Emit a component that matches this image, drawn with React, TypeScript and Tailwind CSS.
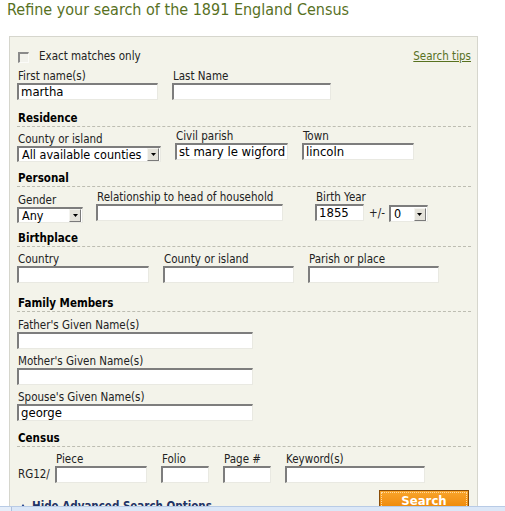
import React from "react";

const FONT =
  "font-['DejaVu_Sans_Condensed','DejaVu_Sans',sans-serif] [font-stretch:semi-condensed]";

function Field({ className, value }: { className: string; value?: string }) {
  return (
    <div
      className={
        "h-[17px] shrink-0 overflow-hidden whitespace-nowrap border-t-2 border-l-2 border-b border-r border-t-[#7d7d7d] border-l-[#7d7d7d] border-b-[#e9e9e2] border-r-[#e9e9e2] bg-white pl-[2px] text-[13px] leading-[14px] text-black " +
        className
      }
    >
      {value}
    </div>
  );
}

function Arrow() {
  return (
    <div className="flex h-[13px] w-[12px] shrink-0 items-center justify-center border border-t-[#f4f4f0] border-l-[#f4f4f0] border-b-[#7a7a7a] border-r-[#7a7a7a] bg-[#e4e2da]">
      <svg width="5" height="3" viewBox="0 0 5 3">
        <path d="M0 0h5L2.5 3z" fill="#000" />
      </svg>
    </div>
  );
}

function Select({ className, value }: { className: string; value: string }) {
  return (
    <div
      className={
        "flex shrink-0 items-center justify-between border-t-2 border-l-2 border-b border-r border-t-[#7d7d7d] border-l-[#7d7d7d] border-b-[#e9e9e2] border-r-[#e9e9e2] bg-white pl-[3px] pr-[1px] text-[12.5px] leading-[14px] text-black " +
        className
      }
    >
      <span className="whitespace-nowrap">{value}</span>
      <Arrow />
    </div>
  );
}

function Label({ children, className = "" }: { children: React.ReactNode; className?: string }) {
  return (
    <div className={"h-[13px] whitespace-nowrap pl-[1px] text-[11.5px] leading-[13px] text-[#222] " + className}>
      {children}
    </div>
  );
}

function Heading({ children, className }: { children: React.ReactNode; className: string }) {
  return (
    <div
      className={
        "border-b border-dashed border-[#bdbdb2] pb-[1px] pl-[1px] text-[11.5px] font-bold leading-[13px] text-black " +
        className
      }
    >
      {children}
    </div>
  );
}

export default function App() {
  return (
    <div className={"relative h-[511px] w-[505px] overflow-hidden bg-white " + FONT}>
      <h1 className="pl-[7px] pt-[1px] text-[16px] font-normal leading-[18px] text-[#58711f]">
        Refine your search of the 1891 England Census
      </h1>

      <div className="ml-[9px] mt-[17px] w-[469px] border border-[#d6d6cd] bg-[#f3f3ea] pb-[40px] pl-[7px] pr-[6px] pt-[13px]">
        <div className="flex h-[13px] items-start justify-between">
          <div className="flex items-start">
            <div className="ml-[1px] mt-[2px] h-[11px] w-[11px] border-t-2 border-l-2 border-b border-r border-t-[#8a8a8a] border-l-[#8a8a8a] border-b-[#fbfbf8] border-r-[#fbfbf8] bg-[#f2f2ec]" />
            <span className="ml-[10px] text-[11.5px] leading-[13px] text-[#222]">Exact matches only</span>
          </div>
          <a className="text-[11.5px] leading-[13px] text-[#58711f] underline" href="#">
            Search tips
          </a>
        </div>

        <div className="mt-[7px] flex gap-[14px]">
          <div>
            <Label>First name(s)</Label>
            <Field className="w-[141px]" value="martha" />
          </div>
          <div>
            <Label>Last Name</Label>
            <Field className="w-[159px]" />
          </div>
        </div>

        <Heading className="mt-[12px]">Residence</Heading>
        <div className="mt-[3px] flex gap-[14px]">
          <div className="pt-[3px]">
            <Label>County or island</Label>
            <Select className="h-[16px] w-[144px]" value="All available counties" />
          </div>
          <div>
            <Label>Civil parish</Label>
            <Field className="w-[113px]" value="st mary le wigford" />
          </div>
          <div>
            <Label>Town</Label>
            <Field className="w-[112px]" value="lincoln" />
          </div>
        </div>

        <Heading className="mt-[10px]">Personal</Heading>
        <div className="mt-[4px] flex">
          <div className="pt-[3px]">
            <Label>Gender</Label>
            <Select className="h-[16px] w-[66px]" value="Any" />
          </div>
          <div className="ml-[13px]">
            <Label>Relationship to head of household</Label>
            <Field className="w-[187px]" />
          </div>
          <div className="ml-[32px]">
            <Label>Birth Year</Label>
            <div className="flex items-start">
              <Field className="w-[49px]" value="1855" />
              <span className="ml-[5px] mt-[3px] text-[11.5px] leading-[13px] text-[#222]">+/-</span>
              <Select className="ml-[4px] mt-[1px] h-[17px] w-[39px]" value="0" />
            </div>
          </div>
        </div>

        <Heading className="mt-[9px]">Birthplace</Heading>
        <div className="mt-[6px] flex gap-[14px]">
          <div>
            <Label>Country</Label>
            <Field className="w-[132px]" />
          </div>
          <div>
            <Label>County or island</Label>
            <Field className="w-[131px]" />
          </div>
          <div>
            <Label>Parish or place</Label>
            <Field className="w-[131px]" />
          </div>
        </div>

        <Heading className="mt-[14px]">Family Members</Heading>
        <div className="mt-[7px]">
          <Label>Father's Given Name(s)</Label>
          <Field className="w-[236px]" />
        </div>
        <div className="mt-[6px]">
          <Label>Mother's Given Name(s)</Label>
          <Field className="w-[236px]" />
        </div>
        <div className="mt-[6px]">
          <Label>Spouse's Given Name(s)</Label>
          <Field className="w-[236px]" value="george" />
        </div>

        <Heading className="mt-[11px]">Census</Heading>
        <div className="mt-[6px] flex items-end">
          <div className="flex h-[17px] w-[38px] items-center pl-[1px] text-[11.5px] leading-[13px] text-[#222]">
            RG12/
          </div>
          <div>
            <Label>Piece</Label>
            <Field className="w-[92px]" />
          </div>
          <div className="ml-[14px]">
            <Label>Folio</Label>
            <Field className="w-[48px]" />
          </div>
          <div className="ml-[14px]">
            <Label>Page #</Label>
            <Field className="w-[48px]" />
          </div>
          <div className="ml-[14px]">
            <Label>Keyword(s)</Label>
            <Field className="w-[140px]" />
          </div>
        </div>

        <div className="mt-[7px] flex items-start justify-between pr-[2px]">
          <div className="ml-[2px] mt-[10px] flex items-center text-[11.5px] font-bold leading-[13px] text-[#1f3366]">
            <svg width="8" height="6" viewBox="0 0 8 6" className="mr-[5px]">
              <path d="M0 6L4 0L8 6z" fill="#1f3f8a" />
            </svg>
            Hide Advanced Search Options
          </div>
          <div className="h-[20px] w-[90px] border border-[#8a4d08] bg-gradient-to-b from-[#f9a52a] to-[#ee8700] p-[1px]">
            <div className="flex h-full w-full items-center justify-center border border-dotted border-[#ffd9a0] text-[13px] font-bold leading-[15px] text-white">
              Search
            </div>
          </div>
        </div>
      </div>

      <div className="absolute bottom-0 left-0 flex h-[5px] w-full border-t border-[#b8cbe6] bg-[#dbe7f7]">
        <div className="h-full w-[12px] border-r border-[#aebfdc] bg-[#e6eef9]" />
      </div>
    </div>
  );
}
